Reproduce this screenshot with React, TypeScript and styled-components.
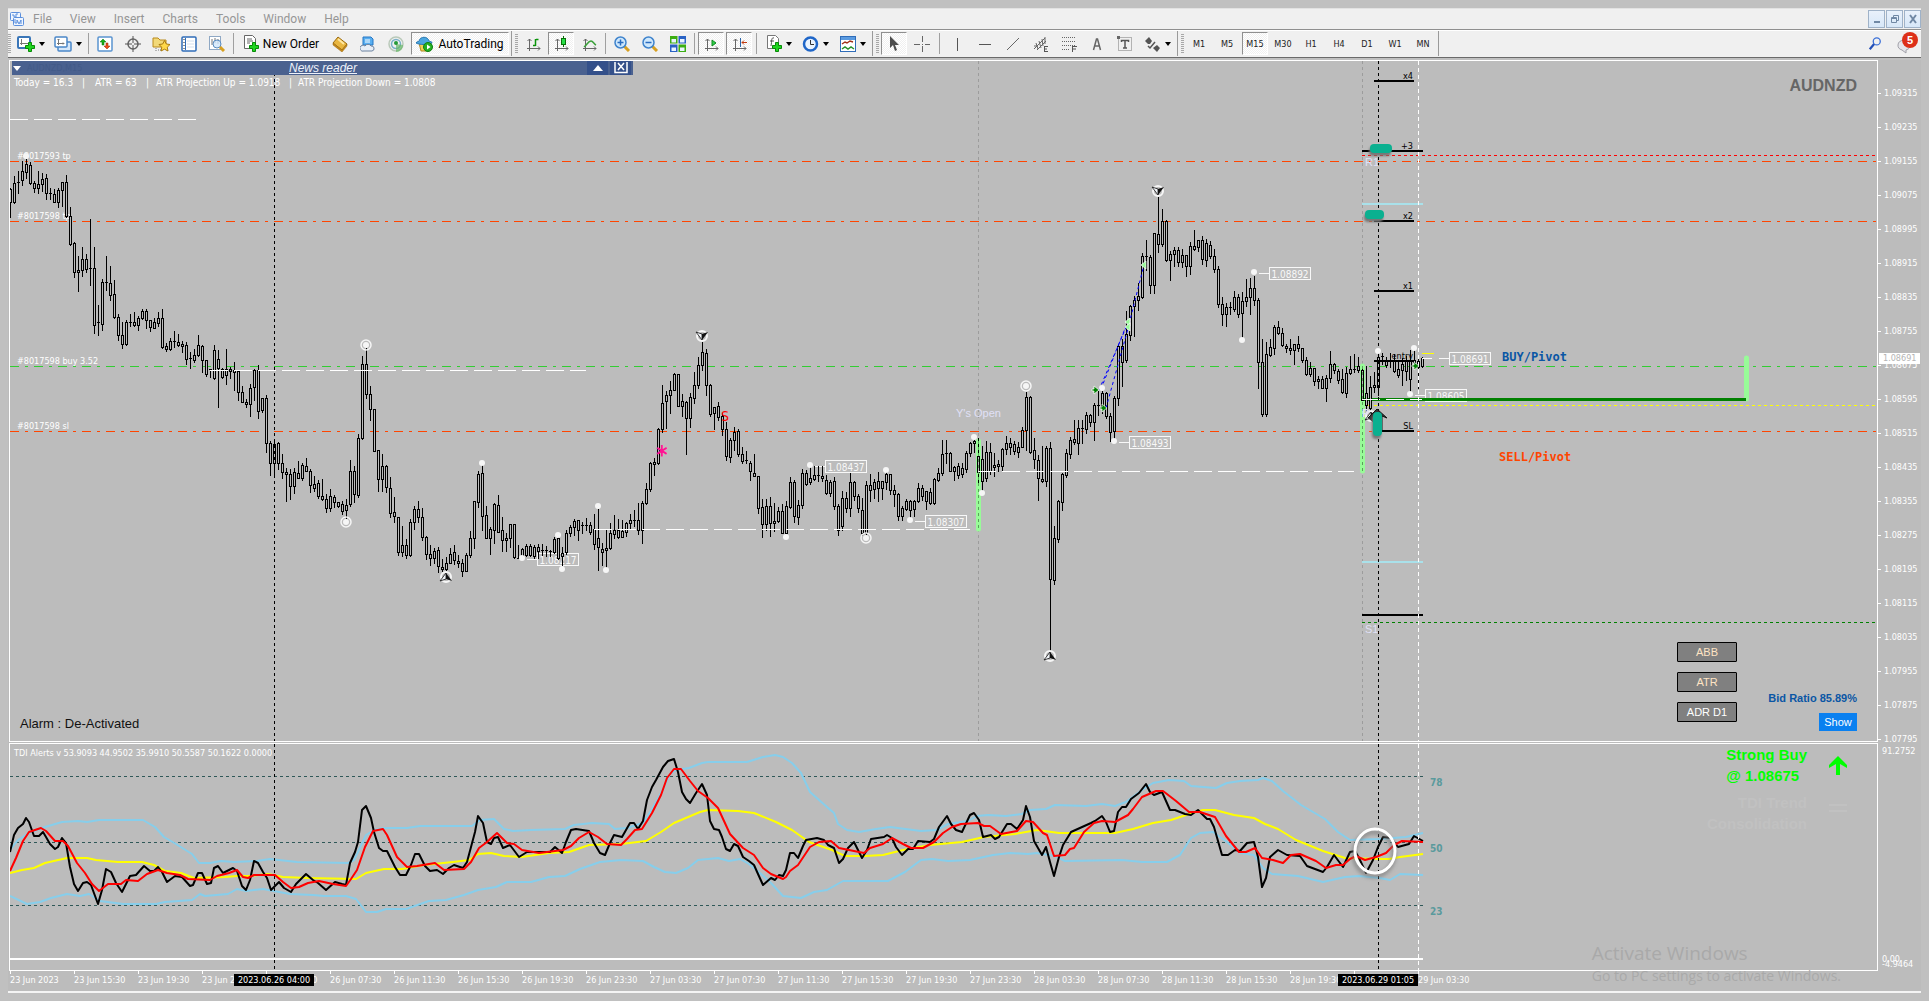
import React from "react";
import styled, { createGlobalStyle, css } from "styled-components";

const UI = `Roboto, "Liberation Sans", sans-serif`;
const TICK = `"DejaVu Sans Condensed", "DejaVu Sans", sans-serif`;
const ARIAL = `"Liberation Sans", Arial, sans-serif`;
const BG = "#bcbcbc";
const ORDER = "#ff4500";

const Global = createGlobalStyle`
  *, *::before, *::after { box-sizing: border-box; }
  body { margin: 0; background: #c0c0c0; font-family: ${UI}; }
  button { font: inherit; color: inherit; margin: 0; padding: 0; border: 0; background: none; }
`;

/* ---------- shell ---------- */

const Shell = styled.div`
  display: flex;
  flex-direction: column;
  min-height: 100vh;
  padding: 8px;
  overflow: hidden;
`;

const MenuBar = styled.nav`
  display: flex;
  align-items: center;
  height: 21px;
  padding-left: 2px;
  background: #f0f0f0;
  border-top: 1px solid #e2e2e2;
  color: #969696;
  font-size: 12px;
  gap: 9px;
`;

const MenuList = styled.div`
  display: flex;
  gap: 18px;
`;

const MenuItem = styled.button`
  line-height: 18px;
`;

const WindowButtons = styled.div`
  display: flex;
  gap: 1px;
  margin-left: auto;
`;

const WindowButton = styled.button`
  display: flex;
  align-items: center;
  justify-content: center;
  width: 17px;
  height: 18px;
  background: linear-gradient(#e9f1fb, #d7e7f8);
  border: 1px solid #9fb2c8;
`;

const ToolBar = styled.div`
  display: flex;
  align-items: center;
  height: 29px;
  gap: 2px;
  background: #f0f0f0;
  border-top: 1px solid #8f8f8f;
  border-bottom: 1px solid #6a6a6a;
  box-shadow: inset 0 1px 0 #fff;
  color: #000;
  font-size: 12px;
`;

const Grip = styled.span<{ $edge?: boolean }>`
  flex: none;
  width: ${(p) => (p.$edge ? 7 : 3)}px;
  height: 25px;
  border-left: ${(p) => (p.$edge ? "1px solid #9a9a9a" : "0")};
  background: repeating-linear-gradient(#a8a8a8 0 1px, #f0f0f0 1px 2px) right center / 3px 19px no-repeat;
`;

const Edge = styled.span`
  width: 1px;
  height: 25px;
  background: #9a9a9a;
`;

const Sep = styled.span<{ $wide?: boolean }>`
  flex: none;
  width: ${(p) => (p.$wide ? 5 : 3)}px;
  height: 21px;
  background: linear-gradient(#a0a0a0, #a0a0a0) center / 1px 100% no-repeat;
`;

const sunken = css`
  background: repeating-conic-gradient(#ffffff 0 25%, #f0f0f0 0 50%) 0 0 / 2px 2px;
  border: 1px solid;
  border-color: #8f8f8f #fff #fff #8f8f8f;
`;

const Tool = styled.button<{ $w?: number; $on?: boolean }>`
  display: flex;
  flex: none;
  align-items: center;
  justify-content: center;
  gap: 4px;
  width: ${(p) => p.$w ?? 26}px;
  height: 23px;
  border: 1px solid transparent;
  white-space: nowrap;
  ${(p) => p.$on && sunken}
`;

const Frame = styled(Tool)`
  color: #222;
  font-family: ${TICK};
  font-size: 9px;
`;

const Spread = styled.div`
  display: flex;
  gap: 14px;
  margin-left: auto;
  padding-right: 3px;
`;

/* ---------- chart window ---------- */

const ChartWindow = styled.main`
  position: relative;
  display: grid;
  grid-template-columns: minmax(0, 1fr) 43px;
  grid-template-rows: minmax(682px, 1fr) 229px 20px;
  flex: 1;
  margin-top: 2px;
  padding-left: 1px;
  background: ${BG};
  border-bottom: 2px solid #f4f4f4;
`;

const Pane = styled.section`
  position: relative;
  overflow: hidden;
  border: 1px solid #fff;
`;

const IndicatorPane = styled(Pane)`
  margin-top: 1px;
`;

const Canvas = styled.svg`
  display: block;
  font-family: ${TICK};
  font-size: 9px;
`;

const NewsBar = styled.div`
  position: absolute;
  top: 0;
  left: 2px;
  display: flex;
  align-items: center;
  width: 621px;
  height: 14px;
  background: #4a618f;
`;

const Ghost = styled.span`
  width: 268px;
  padding-left: 6px;
  color: #425a88;
  font-family: ${TICK};
  font-size: 9px;
`;

const NewsLink = styled.a`
  margin-right: auto;
  color: #eef2fa;
  font: italic 12px/12px ${ARIAL};
  text-decoration: underline;
`;

const NewsTools = styled.div`
  display: flex;
  gap: 2px;
  padding-right: 2px;
`;

const NewsButton = styled.button`
  display: flex;
  align-items: center;
  justify-content: center;
  width: 21px;
  height: 14px;
  background: #34508a;
`;

const SymbolName = styled.h1`
  position: absolute;
  top: 16px;
  right: 20px;
  margin: 0;
  color: #666;
  font: bold 16px/18px ${ARIAL};
`;

const Indicators = styled.div`
  position: absolute;
  right: 140px;
  bottom: 19px;
  display: grid;
  gap: 10px;
`;

const Indicator = styled.button<{ $plain?: boolean }>`
  width: 60px;
  height: 20px;
  background: #808080;
  border: 1px solid #000;
  border-radius: 1px;
  color: ${(p) => (p.$plain ? "#fff" : "#ffe4c4")};
  font: 11px ${ARIAL};
`;

const BidRatio = styled.div`
  position: absolute;
  right: 20px;
  bottom: 10px;
  display: flex;
  flex-direction: column;
  align-items: flex-end;
  gap: 8px;
  color: #0a56a5;
  font: bold 11px/14px ${ARIAL};
`;

const ShowButton = styled.button`
  width: 38px;
  height: 18px;
  background: #0a80f0;
  color: #fff;
  font: 11px ${ARIAL};
`;

const Alarm = styled.div`
  position: absolute;
  left: 10px;
  bottom: 9px;
  color: #111;
  font: 13px/16px ${ARIAL};
`;

const Signal = styled.div`
  position: absolute;
  top: 0;
  right: 30px;
  display: grid;
  grid-template-columns: auto 18px;
  column-gap: 22px;
  align-items: center;
  color: #00ff00;
  font: bold 15px/21px ${ARIAL};
`;

const SignalText = styled.div<{ $faint?: boolean }>`
  text-align: ${(p) => (p.$faint ? "right" : "left")};
  justify-self: end;
  margin-top: ${(p) => (p.$faint ? 6 : 0)}px;
  color: ${(p) => (p.$faint ? "#c1c1c1" : "inherit")};
`;

const PriceAxis = styled.div`
  position: relative;
  height: 682px;
  padding-top: 16px;
  color: #fff;
  font: 9px/34px ${TICK};
`;

const PriceMark = styled.div`
  display: flex;
  align-items: center;
  height: 34px;
  gap: 3px;

  &::before {
    content: "";
    width: 3px;
    height: 1px;
    background: #fff;
  }
`;

const LastPrice = styled.div`
  position: absolute;
  top: 293px;
  left: 1px;
  width: 41px;
  padding-left: 4px;
  background: #fff;
  color: #b4b4b4;
  line-height: 11px;
`;

const LevelAxis = styled.div`
  position: relative;
  display: flex;
  flex-direction: column;
  padding: 3px 0 0 4px;
  color: #fff;
  font: 9px/12px ${TICK};
`;

const LevelFloor = styled.span<{ $bottom: number }>`
  position: absolute;
  bottom: ${(p) => p.$bottom}px;
`;

const TimeAxis = styled.div`
  position: relative;
  display: flex;
  grid-column: 1 / -1;
  padding-left: 1px;
  color: #fff;
  font: 9px/12px ${TICK};
`;

const TimeMark = styled.span`
  flex: none;
  width: 64px;
  white-space: nowrap;

  &::before {
    content: "";
    display: block;
    width: 1px;
    height: 3px;
    background: #fff;
  }
`;

const CursorTime = styled.span<{ $left: number }>`
  position: absolute;
  top: 3px;
  left: ${(p) => p.$left}px;
  width: 80px;
  background: #000;
  color: #fff;
  line-height: 12px;
  text-align: center;
`;

const Watermark = styled.aside`
  position: absolute;
  right: 80px;
  bottom: 5px;
  color: #a9a9a9;
  font: 14px/20px "Open Sans", sans-serif;
`;

const WatermarkTitle = styled.div`
  font-size: 19px;
  line-height: 26px;
`;

/* ---------- icons ---------- */

const Ico = ({ w = 16, h = 16, children }: { w?: number; h?: number; children: React.ReactNode }) => (
  <svg width={w} height={h} viewBox={`0 0 ${w} ${h}`} fill="none" aria-hidden="true">
    {children}
  </svg>
);

const Caret = () => (
  <Ico w={6} h={4}>
    <path d="M0 0h6L3 4z" fill="#000" />
  </Ico>
);

const Plus = ({ x, y }: { x: number; y: number }) => (
  <path
    transform={`translate(${x} ${y})`}
    d="M3.5 .5h3v3h3v3h-3v3h-3v-3h-3v-3h3z"
    fill="#1fd51f"
    stroke="#078a07"
  />
);

const AppIcon = () => (
  <Ico w={14}>
    <rect x=".5" y="1.500" width="10" height="8" rx="1" fill="#eef5ff" stroke="#5b8fdc" />
    <rect x="3.500" y="6.500" width="10" height="8" rx="1" fill="#eef5ff" stroke="#5b8fdc" />
    <path d="M2 4h2v2h2V3h2M5 8v4h2V9l2 4 2-4v4" stroke="#5b8fdc" />
  </Ico>
);
const NewChartIcon = () => (
  <Ico w={18}>
    <rect x="1" y="1" width="12" height="11" rx="1" fill="#fff" stroke="#3a76b8" strokeWidth="2" />
    <path d="M4.500 3v6M3 7.500h8" stroke="#777" />
    <Plus x={8} y={6} />
  </Ico>
);
const ProfilesIcon = () => (
  <Ico w={18}>
    <rect x="4" y="6" width="13" height="9" rx="1" fill="#d6e8fa" stroke="#4a86c8" strokeWidth="1.500" />
    <rect x="1" y="1" width="12" height="10" rx="1" fill="#fff" stroke="#4a86c8" strokeWidth="1.500" />
    <path d="M4.500 3v6M3 7.500h7M3.500 4l1-1 1 1M9 6.500l1 1-1 1" stroke="#777" />
  </Ico>
);
const MarketIcon = () => (
  <Ico>
    <rect x="1" y="1" width="14" height="14" rx="1" fill="#fff" stroke="#5a94d0" strokeWidth="1.500" />
    <path d="M6 3 3 6h2v3h2V6h2z" fill="#18b018" stroke="#087008" strokeWidth=".5" />
    <path d="m10 13 3-3h-2V7H9v3H7z" fill="#f04c18" stroke="#902808" strokeWidth=".5" />
  </Ico>
);
const CrosshairIcon = () => (
  <Ico>
    <circle cx="8" cy="8" r="5" stroke="#666" strokeWidth="1.500" />
    <path d="M8 0v7M8 9v7M0 8h7M9 8h7" stroke="#555" />
  </Ico>
);
const StarIcon = () => (
  <Ico w={19}>
    <path d="M1 2h5l2 2h6v7H1z" fill="#f2d979" stroke="#b98a1c" />
    <path d="M4 12v4m2-2h3" stroke="#777" strokeDasharray="1 1" />
    <path d="m12.500 4.500 1.800 3.500 3.700.5-2.700 2.700.7 3.800-3.500-1.800L9 15l.7-3.800L7 8.500l3.700-.5z" fill="#ffd84a" stroke="#a87a10" />
  </Ico>
);
const ListIcon = () => (
  <Ico>
    <rect x="1" y="1" width="14" height="14" rx="1" fill="#fff" stroke="#2f6cb8" strokeWidth="1.500" />
    <path d="M4.500 2v12" stroke="#2f6cb8" />
    <path d="M3 3v10" stroke="#222" strokeDasharray="1 2" />
    <path d="M6 5h7M6 8h7M6 11h7" stroke="#d2dfee" />
  </Ico>
);
const TesterIcon = () => (
  <Ico w={18}>
    <rect x="1.500" y=".5" width="11" height="13" fill="#fff" stroke="#8fa8c4" />
    <path d="M4 3v6m3-7v5m3-4v5" stroke="#777" />
    <circle cx="9" cy="8" r="4" fill="#cfe6fb" fillOpacity=".8" stroke="#5a8cc0" />
    <path d="m12 11 4 4" stroke="#d8a020" strokeWidth="3" />
  </Ico>
);
const OrderIcon = () => (
  <Ico h={17}>
    <path d="M1.500.5h8l3 3v10h-11z" fill="#fff" stroke="#666" />
    <path d="M4 4h5M4 6h6M4 8h3" stroke="#666" />
    <Plus x={6} y={7} />
  </Ico>
);
const BookIcon = () => (
  <Ico>
    <path d="m6 1 9 7-5 6-9-7z" fill="#e9b640" stroke="#9a6a10" />
    <path d="m1 7 9 7 5-6v2l-5 6-9-7z" fill="#c88a1a" stroke="#9a6a10" strokeWidth=".5" />
    <path d="m6 3 6 5" stroke="#ffe7a0" strokeWidth="2" />
  </Ico>
);
const CloudIcon = () => (
  <Ico>
    <path d="M3 1h8l2 2v6H3z" fill="#58aef0" stroke="#2576c4" />
    <path d="M5 4h5M5 6h5" stroke="#fff" />
    <path d="M4 15a3 3 0 1 1 1-5 3.500 3.500 0 0 1 6 0 2.500 2.500 0 1 1 1 5z" fill="#e8eef6" stroke="#6c83a0" />
  </Ico>
);
const SignalIcon = () => (
  <Ico>
    <circle cx="8" cy="8" r="7" stroke="#b9c9b9" strokeWidth="1.500" />
    <circle cx="8" cy="8" r="4.500" stroke="#7ab0c8" strokeWidth="1.500" />
    <path d="M8 8v8c4 0 7-3 7-7" fill="#66b866" fillOpacity=".7" />
    <circle cx="8" cy="7" r="2" fill="#259a38" />
  </Ico>
);
const AutoIcon = () => (
  <Ico w={18}>
    <path d="m3 7 2 8h6l4-8z" fill="#f2cf58" stroke="#b08820" />
    <path d="M0 7c1-2 3-1 3-2 1-5 9-5 10 0 1 1 3 0 3 2-4 2-12 2-16 0z" fill="#4aa6e0" stroke="#2a78b0" />
    <circle cx="12" cy="11" r="4.500" fill="#22b022" stroke="#0f7f0f" />
    <path d="m11 8.500 3.500 2.500-3.500 2.500z" fill="#fff" />
  </Ico>
);
const Axes = ({ children }: { children?: React.ReactNode }) => (
  <Ico w={15}>
    <path d="M3.500 15V3m-2 2 2-2 2 2M1 12.500h13m-2-2 2 2-2 2" stroke="#666" />
    {children}
  </Ico>
);
const BarsIcon = () => (
  <Axes>
    <path d="M9.500 3v7M7 9.500h2.500M10 3.500h2.500" stroke="#0a940a" strokeWidth="1.500" />
  </Axes>
);
const CandleIcon = () => (
  <Axes>
    <path d="M9.500 0v11" stroke="#087008" />
    <rect x="7.500" y="2.500" width="4" height="6" fill="#28e048" stroke="#087008" />
  </Axes>
);
const LineIcon = () => (
  <Axes>
    <path d="M2 11c3-2 4-6 7-6 2 0 3 3 5 4" stroke="#3aa03a" strokeWidth="1.500" />
  </Axes>
);
const ShiftIcon = () => (
  <Axes>
    <path d="m8 4 4 3-4 3z" fill="#2fd04a" stroke="#128a20" />
  </Axes>
);
const ShiftEndIcon = () => (
  <Axes>
    <path d="M8.500 2v9" stroke="#2a64a8" />
    <path d="M15 6.500H10m2-2-2 2 2 2" stroke="#c03a10" />
  </Axes>
);
const ZoomIcon = ({ plus }: { plus?: boolean }) => (
  <Ico w={17}>
    <path d="m10 10 5 5" stroke="#d8a020" strokeWidth="3" />
    <circle cx="6.500" cy="6.500" r="5.500" fill="#cfe8fc" stroke="#3f83cc" strokeWidth="1.500" />
    <path d={plus ? "M3.500 6.500h6M6.500 3.500v6" : "M3.500 6.500h6"} stroke="#2a6cc0" strokeWidth="1.500" />
  </Ico>
);
const TileIcon = () => (
  <Ico>
    <path d="M0 0h7.500v7.500H0zM8.500 8.500H16V16H8.500z" fill="#3cae12" />
    <path d="M8.500 0H16v7.500H8.500zM0 8.500h7.500V16H0z" fill="#2a62c4" />
    <path d="M1.500 3h4.500v3.500H1.500zM10 3h4.500v3.500H10zM1.500 11.500h4.500V15H1.500zM10 11.500h4.500V15H10z" fill="#eaf4ff" />
  </Ico>
);
const IndicatorIcon = () => (
  <Ico h={17}>
    <path d="M1.500.5h8l3 3v10h-11z" fill="#fff" stroke="#777" />
    <path d="M8 3c-3-1-2 3-3 8M4 6h4" stroke="#555" />
    <Plus x={6} y={7} />
  </Ico>
);
const ClockIcon = () => (
  <Ico w={17}>
    <circle cx="8.500" cy="8" r="6.500" fill="#eaf4ff" stroke="#1f66c8" strokeWidth="2.500" />
    <path d="M8.500 4v4.500H12" stroke="#333" />
  </Ico>
);
const TemplateIcon = () => (
  <Ico>
    <rect x=".5" y=".5" width="15" height="15" fill="#fff" stroke="#2f6cb8" />
    <path d="M1 2.500h14" stroke="#5a9ae0" strokeWidth="3" />
    <path d="m2 8 3-2 2 1 3-2 3 1" stroke="#a03018" strokeWidth="1.500" />
    <path d="m2 13 3-2 3 2 3-2 3 2" stroke="#28902c" strokeWidth="1.500" />
  </Ico>
);
const CursorIcon = () => (
  <Ico w={10}>
    <path d="M1 0v12l3-3 2 6 2-1-2-5h4z" fill="#4c4c4c" />
  </Ico>
);
const CrossIcon = () => (
  <Ico>
    <path d="M8.500 0v6m0 4v6M0 8.500h6m5 0h5M8 8.500h1" stroke="#666" />
  </Ico>
);
const VLineIcon = () => (
  <Ico>
    <path d="M8.500 2v13" stroke="#555" />
  </Ico>
);
const HLineIcon = () => (
  <Ico>
    <path d="M2 8.500h12" stroke="#555" />
  </Ico>
);
const TrendIcon = () => (
  <Ico>
    <path d="m2 14 12-12" stroke="#666" />
  </Ico>
);
const ChannelIcon = () => (
  <Ico>
    <path d="M1 13 12 2M4 14l9-9M3 7l2 6M6 5l2 7M9 3l1 7M12 1v7M1 10h4" stroke="#666" />
    <path d="M11.500 10v6M11 10.500h4M11 13h3M11 15.500h4" stroke="#555" />
  </Ico>
);
const FiboIcon = () => (
  <Ico>
    <path d="M1 1.500h14M1 5.500h14M1 9.500h14M1 13.500h8" stroke="#666" strokeDasharray="1 1" />
    <path d="M11.500 16v-6M11 10.500h5M11 13h4" stroke="#555" />
  </Ico>
);
const TextIcon = () => (
  <Ico>
    <path d="M4.500 14 7.500 3h1l3 11M5.500 10h5" stroke="#666" strokeWidth="1.500" />
  </Ico>
);
const TextBoxIcon = () => (
  <Ico>
    <rect x="1.500" y="1.500" width="13" height="13" stroke="#777" strokeDasharray="1 1" />
    <path d="M4.500 6V4.500h7V6M8 4.500V12M6 12h4" stroke="#555" strokeWidth="1.500" />
    <path d="M0 0h3v3H0z" fill="#666" />
  </Ico>
);
const ArrowsIcon = () => (
  <Ico>
    <path d="m4 1 3 4-2 3H3L0 5zM12 9l3 3-3 4-4-4z" fill="#555" />
    <path d="m3 10 2 2 5-6" stroke="#555" strokeWidth="1.500" />
  </Ico>
);
const SearchIcon = () => (
  <Ico>
    <circle cx="10" cy="5" r="4" stroke="#3b70d8" strokeWidth="1.500" />
    <path d="m7 8-5 6" stroke="#2450b8" strokeWidth="2.500" />
  </Ico>
);

const Badge = styled.button`
  position: relative;
  display: flex;
  align-items: flex-start;
  justify-content: flex-end;
  width: 21px;
  height: 23px;
`;

const BadgeCount = styled.span`
  position: relative;
  width: 16px;
  height: 16px;
  border-radius: 8px;
  background: #dd3018;
  color: #fff;
  font: bold 11px/16px ${ARIAL};
  text-align: center;
`;

const Bubble = styled.svg`
  position: absolute;
  left: 0;
  bottom: 1px;
`;

/* ---------- price data ---------- */

// Each run holds high, open/close top, open/close bottom and low for every bar,
// counted in thirds of a pixel below the run's base line.
type Run = { base: number; bars: number[][] };

const rows = (text: string): number[][] =>
  text
    .trim()
    .split(/\s+/)
    .map((bar) => bar.split(",").map(Number));

const RUNS: Run[] = [
  {
    base: 120,
    bars: rows(`
205,208,248,292 168,190,248,250 155,186,188,220 124,154,182,195 118,132,156,175 127,136,190,192
183,190,206,218 154,193,206,220 160,178,192,214 163,175,220,238 205,220,224,238 208,223,248,248
205,211,248,262 187,187,211,260 166,187,290,292 262,289,374,377 367,370,458,473 408,451,458,515
382,418,452,470 404,418,449,458 298,444,448,497 382,445,617,641 556,608,611,647 478,487,614,632
408,487,490,512 438,490,527,542 480,523,592,596 582,592,647,662 606,647,674,686 601,607,674,677
583,606,609,620 577,607,617,620 590,595,617,632 568,573,596,598 568,573,601,626 601,601,623,635
596,607,624,626 576,595,611,620 568,595,682,684 670,680,689,695 655,664,689,692 633,664,668,683
642,668,677,680 665,674,678,697 668,676,718,734 697,715,718,746 688,706,720,728 645,676,706,708
676,680,721,757 721,721,763,770 748,748,752,772 676,691,775,779 691,718,745,863 745,748,772,774
688,748,767,794 742,748,755,776 727,752,756,812 754,755,817,842 799,817,848,848 838,847,853,863
793,804,853,890 748,751,803,842 736,751,875,896 835,835,871,878 826,835,970,998 964,970,1031,1067
958,973,1031,1064 967,970,1031,1049 1003,1031,1057,1076 1045,1057,1063,1145 1047,1063,1100,1139
1046,1058,1100,1121 1023,1061,1076,1076 1031,1036,1074,1080 1014,1038,1053,1055 1047,1055,1097,1118
1068,1093,1105,1115 1080,1090,1130,1136 1077,1130,1139,1141 1124,1139,1166,1176 1108,1130,1166,1175
1125,1131,1148,1163 1146,1147,1158,1161 1143,1154,1175,1182 1138,1156,1172,1196 1020,1054,1154,1158
1038,1054,1123,1148 943,955,1127,1131 709,733,955,958 686,733,823,836 798,823,868,902
868,868,995,995 991,991,1078,1115 1003,1039,1078,1115 1036,1039,1103,1118 1072,1105,1180,1192
1132,1177,1190,1207 1192,1192,1298,1307 1218,1276,1298,1310 1258,1276,1307,1316 1198,1207,1307,1309
1160,1168,1208,1229 1144,1168,1192,1208 1165,1192,1252,1262 1250,1252,1303,1318 1275,1303,1316,1337
1285,1294,1315,1330 1282,1292,1340,1358 1318,1342,1349,1355 1312,1330,1349,1352 1285,1303,1330,1330
1276,1297,1321,1333 1306,1323,1329,1342 1318,1330,1355,1370 1300,1306,1355,1355 1233,1255,1306,1312
1144,1144,1256,1284 1053,1063,1146,1163 1036,1060,1190,1230 1158,1186,1256,1256 1222,1228,1256,1304
1150,1153,1232,1271 1126,1156,1236,1238`),
  },
  {
    base: 300,
    bars: rows(`
652,691,721,755 700,715,721,754 673,673,716,742 673,673,772,776 735,774,776,776 745,748,768,772
733,739,766,769 733,740,766,770 735,742,768,774 732,742,754,776 732,750,754,766 738,751,755,768
751,754,758,769 713,717,757,760 700,715,775,777 742,760,769,796 691,700,757,763 675,682,700,708
658,663,682,706 661,661,691,720 666,675,680,700 654,675,680,692 667,676,697,703 642,688,733,747
628,715,741,812 729,748,757,795 687,745,751,803 670,700,745,747 645,692,702,714 658,692,712,714
661,694,712,713 667,670,698,708 642,662,670,685 630,660,664,680 610,661,691,703 603,610,691,731
550,568,610,612 487,490,569,575 475,488,493,527 384,388,491,492 256,310,388,396 274,287,304,384
244,271,287,341 220,223,271,272 223,223,320,320 282,304,320,348 304,307,356,464 280,292,356,383
216,256,294,310 171,196,256,265 127,157,196,210 148,160,256,286 253,256,343,348 322,322,341,389
306,320,352,360 340,348,388,407 368,388,469,480 416,421,473,488 382,397,421,450 388,394,463,470
442,463,485,490 454,480,484,490 484,490,514,542 463,520,529,530 529,530,625,640 598,622,674,711
598,620,674,692 592,620,670,708 610,664,671,694 622,634,664,668 614,634,700,701 604,619,700,701
532,546,622,624 541,546,650,666 600,616,652,672 508,520,617,625 512,520,552,556 500,535,548,553
499,526,537,542 498,526,530,543 498,530,536,544 526,541,581,583 541,547,581,588 532,544,619,628
612,619,690,705 574,595,680,691 576,595,626,638 520,547,626,650 544,547,590,601 583,589,626,636
595,631,700,705 544,556,700,703 524,555,571,605 537,547,568,594 516,545,565,604 544,545,566,598
515,523,547,567 523,523,572,583 556,571,582,620 580,583,650,662 618,625,650,660 598,604,628,630
601,604,630,652 600,604,628,648 550,565,604,606 556,565,590,601 574,574,604,628 564,578,610,612
535,538,610,612 505,520,541,543 420,463,520,525 420,460,464,490 456,460,514,515 498,501,513,540
490,498,526,534 489,506,522,532 454,460,508,517 426,430,460,468 420,424,430,457 415,469,516,553
438,479,545,570 423,457,536,543 429,457,513,524 460,496,502,528 480,492,500,515`),
  },
  {
    base: 170,
    bars: rows(`
834,838,890,902 800,820,838,854 804,820,832,852 814,823,844,853 818,832,848,862 772,780,831,833
668,682,782,840 679,682,848,851 804,842,868,895 856,870,926,990 830,928,934,936 828,835,934,950
816,835,1228,1440 1068,1104,1230,1242 990,994,1108,1118 910,913,997,1022 838,850,916,922
802,810,854,866 750,807,818,822 750,775,820,852 750,775,779,820 726,736,778,790 732,736,757,770
700,706,758,812 665,706,710,736 664,670,710,730 667,670,740,745 730,738,788,815 680,685,785,812
524,530,686,705 508,530,577,648 424,493,572,578 405,409,495,510 378,392,409,500 340,379,392,420
250,259,382,384 210,259,263,300 256,262,346,371 190,190,346,370 82,193,223,248 118,153,223,230
152,154,272,274 244,253,271,332 232,240,253,290 233,241,276,290 238,256,276,292 256,256,290,320
217,230,288,314 180,229,237,242 211,211,233,245 199,211,269,283 208,221,272,290 214,226,259,265
238,259,298,306 288,298,403,411 382,403,433,467 400,412,433,470 397,411,416,432 364,382,418,424
372,382,433,442 366,394,430,502 328,382,394,408 326,355,382,434 318,355,392,405 386,392,577,656
508,577,734,740 518,553,734,740 508,532,556,560 466,473,534,552 454,472,490,494 476,490,526,528
523,530,534,548 508,535,542,552 522,524,542,584 498,523,536,544 534,535,571,578 562,571,613,617
578,595,613,620 595,595,634,647 620,628,634,656 619,628,655,656 616,625,655,695 544,583,625,637
580,583,602,610 598,604,632,640 597,627,668,671 592,610,671,683 560,598,610,612 552,598,602,606
562,589,602,606 596,602,690,692`),
  },
  {
    base: 335,
    bars: rows(`
93,175,210,225 123,157,220,232 112,152,156,172 52,66,157,180 55,64,67,88 66,76,90,96
55,76,80,96 58,80,108,112 82,104,122,126 70,88,106,150 64,78,108,136 46,76,134,172
45,76,82,90 70,80,96,160 66,70,95,98`),
  },
];

const PRICE_MARKS = Array.from({ length: 20 }, (_, i) => (1.09315 - i * 0.0008).toFixed(5));

const TIME_MARKS = [
  "23 Jun 2023", "23 Jun 15:30", "23 Jun 19:30", "23 Jun 23:30", "26 Jun 03:30", "26 Jun 07:30",
  "26 Jun 11:30", "26 Jun 15:30", "26 Jun 19:30", "26 Jun 23:30", "27 Jun 03:30", "27 Jun 07:30",
  "27 Jun 11:30", "27 Jun 15:30", "27 Jun 19:30", "27 Jun 23:30", "28 Jun 03:30", "28 Jun 07:30",
  "28 Jun 11:30", "28 Jun 15:30", "28 Jun 19:30", "28 Jun 23:30", "29 Jun 03:30",
];

const TRACES = {
  upper:
    "10,850 18,840 29,833 45,827 62,822 78,821 87,822 99,820 143,820 155,827 164,837 176,844 192,854 199,863 210,863 221,861 234,862 257,861 270,859 297,862 348,863 354,860 358,852 366,835 374,830 384,828 407,828 420,826 472,826 480,820 494,819 498,823 504,829 513,831 531,830 565,829 574,825 592,823 609,824 615,829 627,828 643,823 652,809 661,793 670,774 676,770 689,768 702,763 708,762 747,762 763,757 775,755 783,757 792,763 801,773 810,792 827,807 834,813 838,824 847,830 859,832 876,829 890,827 921,831 937,830 948,824 968,821 977,816 988,815 1006,816 1022,814 1030,810 1046,809 1055,805 1086,806 1102,804 1115,806 1126,802 1142,790 1153,783 1169,780 1184,781 1191,786 1216,788 1227,783 1240,781 1258,780 1263,778 1272,781 1283,791 1301,805 1325,819 1338,832 1350,840 1380,839 1406,837 1423,833",
  lower:
    "10,896 27,904 40,902 51,898 67,894 80,896 89,894 100,901 123,904 156,904 165,902 192,900 200,894 205,896 228,894 237,889 246,891 263,889 290,894 313,895 324,896 346,896 356,899 366,912 377,912 386,909 406,909 429,901 446,900 464,895 478,890 496,887 507,882 531,882 549,877 565,876 580,869 600,862 621,860 643,861 654,867 665,872 676,873 688,868 698,860 718,858 729,861 740,859 749,864 760,873 771,883 783,896 801,898 814,892 827,890 843,881 888,881 905,872 921,860 932,859 948,861 970,860 993,855 1010,853 1028,854 1037,853 1055,856 1065,861 1122,860 1142,862 1167,862 1180,855 1191,838 1200,833 1213,832 1227,842 1240,853 1254,855 1263,868 1272,874 1298,876 1323,882 1345,877 1359,876 1380,878 1390,880 1400,874 1423,875",
  base:
    "10,873 22,870 34,868 45,863 67,858 87,858 96,860 118,862 142,862 154,865 165,871 181,873 194,878 225,877 237,876 250,876 268,874 283,877 308,878 356,879 366,873 384,869 402,869 424,865 453,862 469,860 478,854 491,853 504,856 522,857 549,853 569,852 589,845 621,844 646,841 661,832 674,823 700,812 708,810 738,811 754,813 776,822 792,830 809,842 832,850 845,856 865,856 883,855 903,850 930,845 962,842 984,837 1015,834 1037,830 1059,833 1095,833 1115,833 1133,829 1153,823 1171,820 1189,814 1203,810 1215,810 1234,815 1254,818 1265,824 1278,829 1296,840 1323,851 1345,858 1380,859 1389,859 1400,857 1423,854",
  price:
    "10,852 14,835 18,828 23,824 26,818 29,822 34,836 39,836 43,832 46,837 50,844 55,849 58,847 62,838 66,843 70,867 74,884 78,891 83,883 87,882 91,885 98,904 102,890 106,869 111,872 116,883 122,892 130,876 136,875 144,866 150,871 154,871 158,867 162,872 167,882 175,876 182,877 190,886 193,885 198,873 202,873 207,884 211,883 214,868 218,866 223,873 229,870 233,868 237,871 242,886 246,890 250,880 254,861 258,863 263,872 267,878 271,890 279,882 284,888 291,892 296,884 306,874 313,880 318,883 326,890 335,882 342,884 346,885 350,863 355,852 358,842 362,810 366,806 371,818 374,832 379,848 383,851 387,851 391,859 395,867 400,875 406,875 411,865 415,854 419,854 425,866 430,871 437,870 443,874 449,868 454,865 463,868 467,862 471,847 475,832 478,816 483,823 487,842 491,844 494,838 498,837 503,848 510,845 519,857 527,852 550,852 555,847 562,853 566,842 571,830 576,829 589,831 594,843 600,853 605,855 610,843 614,835 622,837 630,823 634,823 638,829 643,821 647,800 652,787 656,780 663,767 668,761 674,759 678,772 682,792 686,799 690,803 696,793 702,784 707,795 710,821 714,829 719,830 722,837 726,849 730,851 734,844 738,846 743,857 749,861 754,865 758,874 763,885 771,878 775,880 779,875 783,876 786,870 790,853 794,853 798,858 803,846 806,840 817,838 824,840 828,845 834,848 839,863 843,859 848,848 854,842 862,858 867,850 871,839 884,837 887,835 892,838 896,847 902,855 908,849 913,849 918,841 930,842 934,839 939,827 947,816 951,824 956,830 962,832 970,815 974,813 979,820 983,837 991,835 995,839 999,837 1007,824 1011,824 1017,829 1023,820 1026,806 1030,817 1034,841 1042,855 1046,847 1050,862 1054,876 1059,857 1063,845 1071,832 1091,823 1095,821 1102,816 1106,822 1110,832 1114,831 1118,812 1122,807 1126,807 1131,799 1139,793 1146,784 1150,792 1154,795 1162,792 1170,810 1175,810 1185,814 1191,815 1198,810 1207,819 1210,819 1214,827 1222,855 1228,855 1235,850 1240,851 1247,843 1254,842 1258,857 1262,887 1266,878 1270,857 1278,850 1287,855 1300,856 1307,866 1323,872 1327,867 1334,855 1343,867 1350,852 1355,851 1359,858 1366,873 1373,860 1378,847 1383,837 1391,838 1398,847 1409,844 1414,836 1423,841",
  signal:
    "10,871 16,858 23,841 29,832 41,828 46,831 55,841 63,841 68,846 77,863 85,873 92,884 99,891 108,884 121,884 126,880 138,881 147,874 158,870 167,873 180,875 188,879 210,880 217,876 229,873 237,870 243,877 248,878 254,875 275,875 283,882 291,888 299,887 308,883 319,881 333,884 346,886 351,879 357,870 365,847 373,831 383,829 387,835 397,857 407,867 417,866 435,863 444,870 464,869 471,862 479,848 487,842 497,833 507,843 514,844 522,850 539,853 563,850 571,846 579,838 589,832 598,837 607,844 621,845 627,839 635,830 642,829 652,813 661,795 667,778 674,769 681,769 690,781 698,791 708,798 718,808 730,834 743,848 754,855 763,868 771,874 783,879 786,877 790,871 798,865 810,847 819,842 831,841 839,848 859,852 864,853 870,848 883,844 892,838 903,844 911,848 923,848 934,842 943,833 952,827 961,824 978,823 984,826 990,826 1001,834 1017,831 1026,821 1033,822 1043,833 1047,835 1054,856 1065,855 1070,849 1074,848 1084,832 1094,823 1102,821 1115,822 1128,815 1133,809 1142,797 1156,791 1163,791 1176,801 1189,812 1200,812 1215,817 1226,836 1239,852 1246,852 1255,848 1262,858 1273,860 1283,863 1291,855 1300,854 1316,861 1326,868 1336,865 1343,865 1350,859 1356,856 1365,860 1376,857 1386,853 1394,845 1402,841 1423,842",
};

const DOTS = [
  [26, 156], [482, 463], [522, 558], [558, 535], [562, 569], [598, 506], [606, 570], [786, 537],
  [810, 465], [886, 470], [910, 520], [974, 437], [982, 493], [1102, 388], [1114, 441], [1254, 272],
  [1242, 340], [1378, 351], [1414, 348], [1410, 394],
];
const RINGS = [[366, 345], [346, 522], [866, 538], [1026, 386]];

const ORDERS: [number, string, string][] = [
  [161, "#8017593 tp", ORDER],
  [221, "#8017598 tp", ORDER],
  [366, "#8017598 buy 3.52", "#32cd32"],
  [431, "#8017598 sl", ORDER],
];

const TAGS: [number, number, string][] = [
  [1269, 267, "1.08892"],
  [1129, 436, "1.08493"],
  [825, 460, "1.08437"],
  [925, 515, "1.08307"],
  [537, 553, "1.08217"],
  [1425, 389, "1.08605"],
  [1449, 352, "1.08691"],
];

const TARGETS: [number, number, string][] = [
  [81, 1374, "x4"],
  [151, 1362, "+3"],
  [221, 1374, "x2"],
  [291, 1374, "x1"],
  [361, 1374, "entry"],
  [431, 1380, "SL"],
];

/* ---------- chart parts ---------- */

const Candles = () => {
  let slot = 0;
  return (
    <g stroke="#000" fill={BG} shapeRendering="crispEdges">
      {RUNS.flatMap((run) =>
        run.bars.map(([high, top, bottom, low]) => {
          const x = 10 + 4 * slot++;
          const [h, t, b, l] = [high, top, bottom, low].map((v) => run.base + Math.floor(v / 3));
          return (
            <React.Fragment key={x}>
              <path d={`M${x + 0.5} ${h}V${l + 1}`} />
              {b - t > 1 ? (
                <rect x={x - 0.5} y={t + 0.5} width={2} height={b - t} />
              ) : (
                <path d={`M${x - 1} ${t + 0.5}h3`} />
              )}
            </React.Fragment>
          );
        })
      )}
    </g>
  );
};

const Dash = ({ x1, x2, y, color, dash, w = 1 }: { x1: number; x2: number; y: number; color: string; dash?: string; w?: number }) => (
  <path
    d={`M${x1} ${w % 2 ? y + 0.5 : y}H${x2}`}
    stroke={color}
    strokeWidth={w}
    strokeDasharray={dash}
    shapeRendering="crispEdges"
  />
);

const Upright = ({ x, y1, y2, color, dash }: { x: number; y1: number; y2: number; color: string; dash: string }) => (
  <path d={`M${x + 0.5} ${y1}V${y2}`} stroke={color} strokeDasharray={dash} shapeRendering="crispEdges" />
);

const Turn = ({ x, y, up }: { x: number; y: number; up?: boolean }) => (
  <g transform={`translate(${x} ${y}) scale(1 ${up ? 1 : -1})`}>
    <circle r="5" fill={BG} stroke="#f6f6f6" strokeWidth="2" />
    <path d="M0-4V2L-6 4z" fill="#f2f6fa" stroke="#111" strokeWidth=".8" />
    <path d="M0-4 6 4 0 2z" fill="#111" />
  </g>
);

const Guides = ({ y1, y2 }: { y1: number; y2: number }) => (
  <>
    <Upright x={274} y1={y1} y2={y2} color="#000" dash="3 3" />
    <Upright x={1378} y1={y1} y2={y2} color="#000" dash="3 3" />
    <Upright x={1418} y1={y1} y2={y2} color="#fff" dash="4 3" />
  </>
);

const PriceCanvas = () => (
  <Canvas width={4000} height={680} viewBox="10 61 4000 680" fill="none">
    <Upright x={978} y1={61} y2={741} color="#9c9c9c" dash="3 3" />
    <Upright x={1362} y1={61} y2={741} color="#9c9c9c" dash="3 3" />
    {ORDERS.map(([y, name, color]) => (
      <g key={y}>
        <Dash x1={10} x2={4000} y={y} color={color} dash="9 6 3 6" />
        <text x={17} y={y - 5} dominantBaseline="central" fill="#fff">{name}</text>
      </g>
    ))}
    <Dash x1={1362} x2={4000} y={155} color="#f00" dash="3 3" />
    <Dash x1={1362} x2={4000} y={405} color="#ff0" dash="3 3" />
    <Dash x1={1362} x2={4000} y={622} color="#008000" dash="3 3" />
    <g stroke="#98fb98" strokeWidth="5" strokeLinecap="round">
      <path d="M978.5 441V529M1362.5 366V471M1746.5 358V399" />
    </g>
    {TAGS.map(([x, y, name]) => (
      <g key={name} stroke="#f8f8f8" shapeRendering="crispEdges">
        <rect x={x + 0.5} y={y + 0.5} width={41} height={12} />
        <path d={`M${x - 10} ${y + 6.5}h10`} />
        <text x={x + 21} y={y + 7} dominantBaseline="central" textAnchor="middle" fontSize="10" fill="#f8f8f8" stroke="none">
          {name}
        </text>
      </g>
    ))}
    <Dash x1={1364} x2={1746} y={399} color="#008000" w={3} />
    <Candles />
    <Upright x={978} y1={441} y2={531} color="#5aa05a" dash="3 3" />
    <Upright x={1362} y1={366} y2={473} color="#5aa05a" dash="3 3" />
    <Dash x1={10} x2={196} y={119} color="#fff" dash="18 6" />
    <Dash x1={210} x2={586} y={370} color="#fff" dash="18 6" />
    <Dash x1={594} x2={970} y={529} color="#fff" dash="18 6" />
    <Dash x1={978} x2={1354} y={471} color="#fff" dash="18 6" />
    <Dash x1={1362} x2={1422} y={399} color="#fff" dash="18 6" />
    <Dash x1={1422} x2={1434} y={353} color="#ff0" />
    <Dash x1={1422} x2={1432} y={358} color="#fff" />
    <Dash x1={1362} x2={1423} y={204} color="#a9e1ea" w={2} />
    <Dash x1={1362} x2={1423} y={562} color="#a9e1ea" w={2} />
    <Dash x1={1362} x2={1423} y={615} color="#000" w={2} />
    {TARGETS.map(([y, x, name]) => (
      <g key={name}>
        <Dash x1={x} x2={name === "+3" ? 1423 : 1414} y={y} color="#000" w={2} />
        <text x={1413} y={y - 5} dominantBaseline="central" textAnchor="end" fill="#000">{name}</text>
      </g>
    ))}
    <Guides y1={61} y2={741} />
    <g stroke="#00f" strokeDasharray="3 3">
      <path d="M1099 390 1128 323M1106 408 1129 325M1101 389 1126 326M1129 324 1144 265" />
    </g>
    {[[1095, 390], [1103, 408], [1415, 366]].map(([x, y]) => (
      <path key={y} d={`M${x - 3} ${y - 1}h2v-3l5 4-5 4v-3h-2z`} fill="#008000" stroke="#fff" strokeWidth=".7" />
    ))}
    {[[1144, 265], [1128, 322], [1128, 327]].map(([x, y]) => (
      <path key={y} d={`M${x - 3} ${y}l5-4v8z`} fill="#98fb98" stroke="#fff" strokeWidth=".7" />
    ))}
    {DOTS.map(([x, y]) => (
      <circle key={`${x}-${y}`} cx={x} cy={y} r="3" fill="#f6f6f6" />
    ))}
    {RINGS.map(([x, y]) => (
      <g key={x}>
        <circle cx={x} cy={y} r="5" stroke="#f6f6f6" strokeWidth="1.500" />
        <circle cx={x} cy={y} r="3" fill="#f6f6f6" />
      </g>
    ))}
    <Turn x={702} y={336} />
    <Turn x={1158} y={191} />
    <Turn x={446} y={577} up />
    <Turn x={1050} y={656} up />
    <Turn x={1371} y={416} up />
    <path d="M1368 418 1377 409 1387 418 1382 416V430" fill="#333" stroke="#111" />
    <g fill="#0ab090" filter="drop-shadow(-1px 3px 1px #777)">
      <rect x="1370" y="144" width="22" height="9" rx="4" />
      <rect x="1365" y="210" width="19" height="9" rx="4" />
      <rect x="1373" y="412" width="9" height="24" rx="4" />
    </g>
    <g fontFamily={ARIAL} fontSize="11" fill="#e0e0f6" dominantBaseline="central">
      <text x={1365} y={162}>R1</text>
      <text x={1365} y={629}>S1</text>
      <text x={1362} y={413} fontWeight="bold">P</text>
      <text x={956} y={413}>{"Y's Open"}</text>
    </g>
    <text x={725} y={416} fill="#f00" fontSize="14" textAnchor="middle" dominantBaseline="central">S</text>
    <text x={662} y={463} fill="#ff1493" fontSize="24" fontWeight="bold" textAnchor="middle">*</text>
    <g fontFamily="DejaVu Sans Mono, monospace" fontSize="12" fontWeight="bold" dominantBaseline="central">
      <text x={1502} y={357} fill="#0a56a5">BUY/Pivot</text>
      <text x={1499} y={457} fill={ORDER}>SELL/Pivot</text>
    </g>
    <g fontSize="10" fill="#fff" dominantBaseline="central">
      <text x={14} y={82}>Today = 16.3</text>
      <text x={82} y={82}>|</text>
      <text x={95} y={82}>ATR = 63</text>
      <text x={146} y={82}>|</text>
      <text x={156} y={82}>ATR Projection Up = 1.0918</text>
      <text x={289} y={82}>|</text>
      <text x={298} y={82}>ATR Projection Down = 1.0808</text>
    </g>
  </Canvas>
);

const TdiCanvas = () => (
  <Canvas width={4000} height={226} viewBox="10 744 4000 226" fill="none">
    {[[776, "78"], [842, "50"], [905, "23"]].map(([y, level]) => (
      <g key={level}>
        <Dash x1={10} x2={1423} y={Number(y)} color="#2f5858" dash="3 3" />
        <text x={1430} y={Number(y) + 6} dominantBaseline="central" fontSize="10" fontWeight="bold" fill="#5a9a9c">
          {level}
        </text>
      </g>
    ))}
    <g strokeWidth="2" strokeLinejoin="round">
      <polyline points={TRACES.upper} stroke="#87ceeb" />
      <polyline points={TRACES.lower} stroke="#87ceeb" />
      <polyline points={TRACES.base} stroke="#ff0" />
      <polyline points={TRACES.price} stroke="#000" />
      <polyline points={TRACES.signal} stroke="#f00" />
    </g>
    <Dash x1={10} x2={1423} y={959} color="#fff" w={2} />
    <Guides y1={744} y2={970} />
    <ellipse cx="1375" cy="851" rx="20" ry="22" stroke="#fff" strokeWidth="3" filter="drop-shadow(-1px 3px 2px #777)" />
    <text x={14} y={753} dominantBaseline="central" fill="#fff">
      TDI Alerts v 53.9093 44.9502 35.9910 50.5587 50.1622 0.0000
    </text>
  </Canvas>
);

/* ---------- page ---------- */

const MENU = ["File", "View", "Insert", "Charts", "Tools", "Window", "Help"];
const FRAMES = ["M1", "M5", "M15", "M30", "H1", "H4", "D1", "W1", "MN"];

export default function App() {
  return (
    <>
      <Global />
      <Shell>
        <MenuBar aria-label="Main menu">
          <AppIcon />
          <MenuList>
            {MENU.map((m) => (
              <MenuItem key={m} type="button">{m}</MenuItem>
            ))}
          </MenuList>
          <WindowButtons>
            <WindowButton aria-label="Minimize">
              <Ico w={10} h={10}><path d="M2 8h6" stroke="#7088a4" strokeWidth="2" /></Ico>
            </WindowButton>
            <WindowButton aria-label="Restore">
              <Ico w={10} h={10}><path d="M3.500 3V1.500h5v5H7M1.500 3.500h5v5h-5zM1 4.500h6" stroke="#7088a4" /></Ico>
            </WindowButton>
            <WindowButton aria-label="Close">
              <Ico w={10} h={10}><path d="m2 1 6 8M8 1 2 9" stroke="#7088a4" strokeWidth="2" /></Ico>
            </WindowButton>
          </WindowButtons>
        </MenuBar>
        <ToolBar role="toolbar">
          <Grip />
          <Tool $w={35} aria-label="New chart"><NewChartIcon /><Caret /></Tool>
          <Tool $w={35} aria-label="Profiles"><ProfilesIcon /><Caret /></Tool>
          <Sep />
          <Tool aria-label="Market watch"><MarketIcon /></Tool>
          <Tool aria-label="Data window"><CrosshairIcon /></Tool>
          <Tool aria-label="Navigator"><StarIcon /></Tool>
          <Tool aria-label="Terminal"><ListIcon /></Tool>
          <Tool aria-label="Strategy tester"><TesterIcon /></Tool>
          <Sep />
          <Tool $w={88}><OrderIcon />New Order</Tool>
          <Tool aria-label="MetaEditor"><BookIcon /></Tool>
          <Tool aria-label="Hosting"><CloudIcon /></Tool>
          <Tool aria-label="Signals"><SignalIcon /></Tool>
          <Tool $w={98} $on><AutoIcon />AutoTrading</Tool>
          <Grip $edge />
          <Tool aria-label="Bar chart"><BarsIcon /></Tool>
          <Tool $on aria-label="Candlesticks"><CandleIcon /></Tool>
          <Tool aria-label="Line chart"><LineIcon /></Tool>
          <Sep />
          <Tool aria-label="Zoom in"><ZoomIcon plus /></Tool>
          <Tool aria-label="Zoom out"><ZoomIcon /></Tool>
          <Tool aria-label="Tile windows"><TileIcon /></Tool>
          <Sep />
          <Tool $on aria-label="Auto scroll"><ShiftIcon /></Tool>
          <Tool $on aria-label="Chart shift"><ShiftEndIcon /></Tool>
          <Sep $wide />
          <Tool $w={35} aria-label="Indicators"><IndicatorIcon /><Caret /></Tool>
          <Tool $w={35} aria-label="Periods"><ClockIcon /><Caret /></Tool>
          <Tool $w={35} aria-label="Templates"><TemplateIcon /><Caret /></Tool>
          <Grip $edge />
          <Tool $on aria-label="Cursor"><CursorIcon /></Tool>
          <Tool aria-label="Crosshair"><CrossIcon /></Tool>
          <Sep $wide />
          <Tool aria-label="Vertical line"><VLineIcon /></Tool>
          <Tool aria-label="Horizontal line"><HLineIcon /></Tool>
          <Tool aria-label="Trendline"><TrendIcon /></Tool>
          <Tool aria-label="Channel"><ChannelIcon /></Tool>
          <Tool aria-label="Fibonacci"><FiboIcon /></Tool>
          <Tool aria-label="Text"><TextIcon /></Tool>
          <Tool aria-label="Text label"><TextBoxIcon /></Tool>
          <Tool $w={35} aria-label="Arrows"><ArrowsIcon /><Caret /></Tool>
          <Grip $edge />
          {FRAMES.map((f) => (
            <Frame key={f} $on={f === "M15"}>{f}</Frame>
          ))}
          <Edge />
          <Spread>
            <Tool $w={16} aria-label="Search"><SearchIcon /></Tool>
            <Badge aria-label="Messages">
              <Bubble width="16" height="15" viewBox="0 0 16 15">
                <path d="M1 6a6 5 0 1 1 8 5l0 3-4-3a6 5 0 0 1-4-5z" fill="#e6e6ea" stroke="#a0a0a8" />
              </Bubble>
              <BadgeCount>5</BadgeCount>
            </Badge>
          </Spread>
        </ToolBar>
        <ChartWindow>
          <Pane>
            <PriceCanvas />
            <NewsBar>
              <Ico w={9} h={6}><path d="M1 1h8L5 6z" fill="#fff" /></Ico>
              <Ghost>AUDNZD,M15</Ghost>
              <NewsLink href="#news">News reader</NewsLink>
              <NewsTools>
                <NewsButton aria-label="Collapse">
                  <Ico w={10} h={6}><path d="M0 6h10L5 0z" fill="#fff" /></Ico>
                </NewsButton>
                <NewsButton aria-label="Close news">
                  <Ico w={14} h={12}><path d="M1 0v10.500h12V0M4 1l6 7M10 1 4 8" stroke="#fff" strokeWidth="1.500" /></Ico>
                </NewsButton>
              </NewsTools>
            </NewsBar>
            <SymbolName>AUDNZD</SymbolName>
            <Indicators>
              <Indicator>ABB</Indicator>
              <Indicator>ATR</Indicator>
              <Indicator $plain>ADR D1</Indicator>
            </Indicators>
            <BidRatio>
              Bid Ratio 85.89%
              <ShowButton>Show</ShowButton>
            </BidRatio>
            <Alarm>Alarm : De-Activated</Alarm>
          </Pane>
          <PriceAxis>
            {PRICE_MARKS.map((p) => (
              <PriceMark key={p}>{p}</PriceMark>
            ))}
            <LastPrice>1.08691</LastPrice>
          </PriceAxis>
          <IndicatorPane>
            <TdiCanvas />
            <Signal>
              <SignalText>Strong Buy<br />@ 1.08675</SignalText>
              <Ico w={18} h={20}><path d="M9 1 18 10v3l-7-4v11H7V9l-7 4v-3z" fill="#0f0" /></Ico>
              <SignalText $faint>TDI Trend<br />Consolidation</SignalText>
              <Ico w={18} h={14}><path d="M0 2h18M0 8h18" stroke="#c1c1c1" strokeWidth="2" /></Ico>
            </Signal>
          </IndicatorPane>
          <LevelAxis>
            91.2752
            <LevelFloor $bottom={6}>0.00</LevelFloor>
            <LevelFloor $bottom={1}>-4.9464</LevelFloor>
          </LevelAxis>
          <TimeAxis>
            {TIME_MARKS.map((t) => (
              <TimeMark key={t}>{t}</TimeMark>
            ))}
            <CursorTime $left={225}>2023.06.26 04:00</CursorTime>
            <CursorTime $left={1329}>2023.06.29 01:05</CursorTime>
          </TimeAxis>
          <Watermark>
            <WatermarkTitle>Activate Windows</WatermarkTitle>
            Go to PC settings to activate Windows.
          </Watermark>
        </ChartWindow>
      </Shell>
    </>
  );
}
